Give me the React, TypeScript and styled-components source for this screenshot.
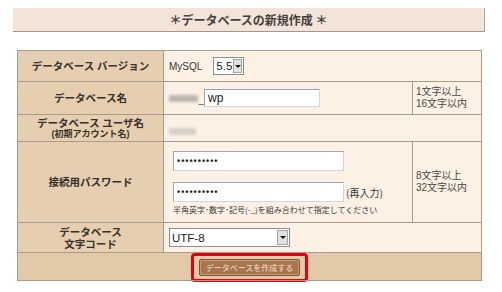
import React from 'react';
import styled, { createGlobalStyle } from 'styled-components';

const GlobalStyle = createGlobalStyle`
  body {
    margin: 0;
    background: #fff;
    font-family: "Noto Sans CJK JP", "Liberation Sans", sans-serif;
    color: #3b3631;
  }
`;

const Page = styled.div`
  width: 502px;
  height: 292px;
  padding-top: 8px;
  box-sizing: border-box;
  overflow: hidden;
`;

const TitleBar = styled.div`
  margin-left: 13px;
  width: 471px;
  height: 23px;
  background: #f3e4da;
  border-right: 1px solid #b3a394;
  border-bottom: 1px solid #a89787;
  display: flex;
  align-items: center;
  justify-content: center;
  font-size: 12px;
  font-weight: bold;
  color: #45403a;
`;

const FormTable = styled.table`
  margin: 18px 0 0 17px;
  width: 464px;
  border-collapse: collapse;
  table-layout: fixed;
`;

const Row = styled.tr<{ $h: number }>`
  height: ${p => p.$h}px;
`;

const Label = styled.th`
  background: #e6ceb0;
  border: 1px solid #ab9b8b;
  padding: 0;
  font-family: "Liberation Sans", "Noto Sans CJK JP", sans-serif;
  font-size: 10.5px;
  font-weight: bold;
  line-height: 12px;
  color: #37312c;
  text-align: center;
`;

const LabelSub = styled.span`
  display: block;
  font-size: 9px;
  line-height: 11px;
`;

const Value = styled.td`
  background: #fdf1e6;
  border: 1px solid #ab9b8b;
  padding: 0 0 0 5px;
  vertical-align: middle;
`;

const Note = styled.td`
  background: #fdf1e6;
  border: 1px solid #ab9b8b;
  padding: 0 0 0 3px;
  font-family: "Liberation Sans", "Noto Sans CJK JP", sans-serif;
  font-size: 10px;
  line-height: 12px;
  color: #4d4741;
`;

const FooterCell = styled.td`
  background: #e2c9a7;
  border: 1px solid #ab9b8b;
  padding: 0;
  vertical-align: top;
`;

const Inline = styled.div`
  display: flex;
  align-items: center;
`;

const Caption = styled.span`
  font: 10px "Liberation Sans", sans-serif;
  color: #3b3631;
  margin-right: 11px;
`;

const Masked = styled.span<{ $w: number; $tone: string }>`
  display: inline-block;
  width: ${p => p.$w}px;
  height: 7px;
  background: ${p => p.$tone};
  filter: blur(1.6px);
`;

const Underscore = styled.span`
  font: 9px "Liberation Sans", sans-serif;
  width: 6px;
  text-align: center;
  align-self: flex-end;
  margin-bottom: 2px;
`;

const Field = styled.div<{ $w: number; $h: number }>`
  width: ${p => p.$w}px;
  height: ${p => p.$h}px;
  box-sizing: border-box;
  background: #fff;
  border: 1px solid #9fa4a8;
  border-right-color: #d6d6d6;
  border-bottom-color: #d6d6d6;
  padding-left: 3px;
  display: flex;
  align-items: center;
  font: 12px "Liberation Sans", sans-serif;
  color: #222;
`;

const Dots = styled.span`
  font: bold 9px "Liberation Sans", sans-serif;
  letter-spacing: 1px;
  color: #222;
`;

const Select = styled.div<{ $w: number; $h: number }>`
  width: ${p => p.$w}px;
  height: ${p => p.$h}px;
  box-sizing: border-box;
  display: flex;
  background: #fff;
  border: 1px solid #8e8e8e;
`;

const SelectText = styled.span`
  flex: 1;
  padding-left: 2px;
  font: 11.5px "Liberation Sans", sans-serif;
  color: #222;
  display: flex;
  align-items: center;
`;

const SelectArrow = styled.span`
  width: 11px;
  margin: 1px;
  box-sizing: border-box;
  background: #e3e1dd;
  border: 1px solid #a9a6a1;
  display: flex;
  align-items: center;
  justify-content: center;

  &::after {
    content: "";
    border-left: 3px solid transparent;
    border-right: 3px solid transparent;
    border-top: 3px solid #111;
  }
`;

const PasswordBlock = styled.div`
  padding: 1px 0 0 4px;
  display: flex;
  flex-direction: column;
`;

const PasswordLine = styled.div`
  display: flex;
  align-items: flex-end;
  margin-bottom: 11px;

  &:nth-child(2) {
    margin-bottom: 3px;
  }
`;

const Reenter = styled.span`
  font-size: 10px;
  line-height: 12px;
  margin-left: 2px;
  margin-bottom: 3px;
  color: #3b3631;
`;

const Hint = styled.div`
  font-size: 8px;
  line-height: 10px;
  color: #3b3631;
  white-space: nowrap;
`;

const Highlight = styled.div`
  width: fit-content;
  margin: 0 auto -3px;
  border: 3px solid #e3000f;
  border-radius: 4px;
  padding: 3px 5px;
`;

const SubmitButton = styled.button`
  display: block;
  width: 101px;
  height: 17px;
  padding: 0;
  background: #a9754f;
  border: 1px solid #7e5436;
  box-shadow: inset 0 0 0 1px #c59a77;
  border-radius: 2px;
  color: #f4e3d2;
  font: 8px "Noto Sans CJK JP", sans-serif;
`;

const App = () => {
  return (
    <Page>
      <GlobalStyle />
      <TitleBar>＊データベースの新規作成 ＊</TitleBar>
      <FormTable>
        <colgroup>
          <col style={{ width: 146 }} />
          <col style={{ width: 249 }} />
          <col style={{ width: 69 }} />
        </colgroup>
        <tbody>
          <Row $h={31}>
            <Label>データベース バージョン</Label>
            <Value colSpan={2}>
              <Inline>
                <Caption>MySQL</Caption>
                <Select $w={31} $h={18}>
                  <SelectText>5.5</SelectText>
                  <SelectArrow />
                </Select>
              </Inline>
            </Value>
          </Row>
          <Row $h={33}>
            <Label>データベース名</Label>
            <Value>
              <Inline>
                <Masked $w={29} $tone="#bdb4ac" />
                <Underscore>_</Underscore>
                <Field $w={116} $h={18}>wp</Field>
              </Inline>
            </Value>
            <Note>1文字以上<br />16文字以内</Note>
          </Row>
          <Row $h={27}>
            <Label>
              データベース ユーザ名
              <LabelSub>(初期アカウント名)</LabelSub>
            </Label>
            <Value colSpan={2}>
              <Masked $w={27} $tone="#d8cfc6" />
            </Value>
          </Row>
          <Row $h={81}>
            <Label>接続用パスワード</Label>
            <Value>
              <PasswordBlock>
                <PasswordLine>
                  <Field $w={171} $h={20}><Dots>••••••••••</Dots></Field>
                </PasswordLine>
                <PasswordLine>
                  <Field $w={171} $h={20}><Dots>••••••••••</Dots></Field>
                  <Reenter>(再入力)</Reenter>
                </PasswordLine>
                <Hint>半角英字･数字･記号(-_)を組み合わせて指定してください</Hint>
              </PasswordBlock>
            </Value>
            <Note>8文字以上<br />32文字以内</Note>
          </Row>
          <Row $h={30}>
            <Label>
              データベース
              <br />
              文字コード
            </Label>
            <Value colSpan={2}>
              <Select $w={121} $h={19}>
                <SelectText>UTF-8</SelectText>
                <SelectArrow />
              </Select>
            </Value>
          </Row>
          <Row $h={28}>
            <FooterCell colSpan={3}>
              <Highlight>
                <SubmitButton type="button">データベースを作成する</SubmitButton>
              </Highlight>
            </FooterCell>
          </Row>
        </tbody>
      </FormTable>
    </Page>
  );
};

export default App;
